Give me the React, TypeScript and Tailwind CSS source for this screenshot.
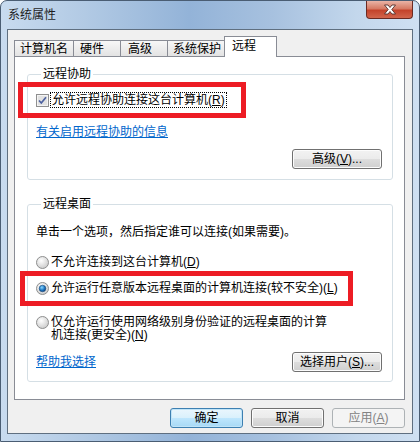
import React from 'react';

function Btn({ children, def, disabled, w = 'w-[73px]' }: { children: React.ReactNode; def?: boolean; disabled?: boolean; w?: string }) {
  if (def) {
    return (
      <div className={`${w} h-[20px] rounded-[3px] border border-[#3c7fb1] bg-[linear-gradient(#eaf6fd_0%,#d9f0fc_50%,#bee6fd_51%,#a7d9f5_100%)] flex items-center justify-center text-[12px] text-black shadow-[inset_0_0_0_1px_#c0e4f8]`}>
        {children}
      </div>
    );
  }
  if (disabled) {
    return (
      <div className={`${w} h-[20px] rounded-[3px] border border-[#adb2b5] bg-[#f4f4f4] flex items-center justify-center text-[12px] text-[#838383]`}>
        {children}
      </div>
    );
  }
  return (
    <div className={`${w} h-[20px] rounded-[3px] border border-[#707070] bg-[linear-gradient(#f2f2f2_0%,#ebebeb_50%,#dddddd_51%,#cfcfcf_100%)] flex items-center justify-center text-[12px] text-black shadow-[inset_0_0_0_1px_#fcfcfc]`}>
      {children}
    </div>
  );
}

function Radio({ on }: { on?: boolean }) {
  return (
    <svg width="13" height="13" viewBox="0 0 13 13" className="shrink-0">
      <defs>
        <radialGradient id="rg" cx="40%" cy="35%" r="70%">
          <stop offset="0%" stopColor="#ffffff" />
          <stop offset="100%" stopColor="#c9c9c9" />
        </radialGradient>
        <radialGradient id="rb" cx="40%" cy="35%" r="70%">
          <stop offset="0%" stopColor="#8ad8ff" />
          <stop offset="60%" stopColor="#1c74c0" />
          <stop offset="100%" stopColor="#0b3e77" />
        </radialGradient>
      </defs>
      <circle cx="6.5" cy="6.5" r="6" fill="url(#rg)" stroke="#8e8f8f" />
      {on && <circle cx="6.5" cy="6.5" r="3.3" fill="url(#rb)" stroke="#1b4a7a" strokeWidth="0.6" />}
    </svg>
  );
}

function Check() {
  return (
    <svg width="13" height="13" viewBox="0 0 13 13" className="shrink-0">
      <rect x="0.5" y="0.5" width="12" height="12" fill="#f4f4f4" stroke="#8f8f8f" />
      <rect x="2" y="2" width="9" height="9" fill="#e2e2e2" />
      <path d="M3 6.5 L5.3 9 L10 3.2" fill="none" stroke="#4d61a0" strokeWidth="1.7" />
    </svg>
  );
}

const u = (c: string) => <span className="underline">{c}</span>;

export default function App() {
  const tabs = [
    { t: '计算机名', w: 'w-[60px]', pl: 'pl-[5px]' },
    { t: '硬件', w: 'w-[48px]', pl: 'pl-[6px]' },
    { t: '高级', w: 'w-[48px]', pl: 'pl-[7px]' },
    { t: '系统保护', w: 'w-[59px]', pl: 'pl-[5px]' },
  ];
  return (
    <div className="relative w-[420px] h-[442px] overflow-hidden rounded-t-[7px] border border-[#4a5d73] bg-[linear-gradient(90deg,#c8dbef_0%,#b2cae4_20%,#93b3d8_45%,#a7c1df_65%,#c3d7ec_85%,#cfe0f2_100%)] font-['Liberation_Sans','Noto_Sans_CJK_SC',sans-serif] text-[12px] text-black">
      {/* title */}
      <div className="h-[28px] pl-[7px] flex items-center text-[12px] text-[#1e1e1e]">系统属性</div>
      <div className="absolute right-[6px] top-0 w-[47px] h-[18px] rounded-b-[4px] border border-t-0 border-[#6b2a22] bg-[linear-gradient(#eab4a6_0%,#d67a64_45%,#c4432b_55%,#d2654c_100%)] flex items-center justify-center">
        <svg width="14" height="11" viewBox="0 0 14 11">
          <path d="M1.5 1 L5 1 L7 3.5 L9 1 L12.5 1 L8.8 5.5 L12.5 10 L9 10 L7 7.5 L5 10 L1.5 10 L5.2 5.5 Z" fill="#ffffff" stroke="#53302a" strokeWidth="0.9" />
        </svg>
      </div>

      {/* client area */}
      <div className="ml-[6px] w-[406px] h-[405px] border border-[#5f6f80] bg-[#f0f0f0] pt-[6px] pl-[6px]">
        <div className="flex items-end h-[20px]">
          {tabs.map((x) => (
            <div key={x.t} className={`${x.w} ${x.pl} h-[16px] -mr-px border border-b-0 border-[#898c95] bg-[linear-gradient(#f7f7f7,#e3e3e3)] flex items-center`}>
              {x.t}
            </div>
          ))}
          <div className="relative z-10 w-[53px] h-[21px] -mb-px -ml-px pl-[7px] pb-[3px] border border-b-0 border-[#898c95] bg-white flex items-center">远程</div>
        </div>

        <div className="w-[391px] h-[344px] border border-[#898c95] bg-white pt-[10px] pl-[12px]">
          <fieldset className="w-[366px] border border-[#d5dfe5] rounded-[3px] pl-[8px] pr-[10px] pb-[10px]">
            <legend className="ml-[5px] px-[2px] leading-[14px]">远程协助</legend>
            <div className="mt-[11px] h-[16px] flex items-center">
              <Check />
              <span className="ml-px px-px leading-[14px] border border-dotted border-black">允许远程协助连接这台计算机({u('R')})</span>
            </div>
            <div className="mt-[17px] leading-[14px] text-[#0066cc] underline">有关启用远程协助的信息</div>
            <div className="mt-[10px] flex justify-end">
              <Btn w="w-[90px]">高级({u('V')})...</Btn>
            </div>
          </fieldset>

          <fieldset className="mt-[17px] w-[366px] border border-[#d5dfe5] rounded-[3px] pl-[8px] pr-[10px] pb-[9px]">
            <legend className="ml-[5px] px-[2px] leading-[14px]">远程桌面</legend>
            <div className="mt-[14px] leading-[14px]">单击一个选项，然后指定谁可以连接(如果需要)。</div>
            <div className="mt-[15px] h-[16px] flex items-center gap-[2px]">
              <Radio />
              <span>不允许连接到这台计算机({u('D')})</span>
            </div>
            <div className="mt-[10px] h-[16px] flex items-center gap-[2px]">
              <Radio on />
              <span>允许运行任意版本远程桌面的计算机连接(较不安全)({u('L')})</span>
            </div>
            <div className="mt-[20px] flex items-start gap-[2px]">
              <Radio />
              <span className="w-[282px] leading-[13px]">仅允许运行使用网络级别身份验证的远程桌面的计算机连接(更安全)({u('N')})</span>
            </div>
            <div className="mt-[10px] h-[20px] flex items-center justify-between">
              <span className="text-[#0066cc] underline">帮助我选择</span>
              <Btn w="w-[90px]">选择用户({u('S')})...</Btn>
            </div>
          </fieldset>
        </div>

        <div className="mt-[8px] w-[391px] flex justify-end gap-[8px]">
          <Btn def>确定</Btn>
          <Btn>取消</Btn>
          <Btn disabled>应用({u('A')})</Btn>
        </div>
      </div>

      {/* red annotation boxes */}
      <div className="absolute left-[17px] top-[81px] w-[228px] h-[36px] border-[5px] border-[#ed1c24]" />
      <div className="absolute left-[19px] top-[270px] w-[333px] h-[35px] border-[5px] border-[#ed1c24]" />
    </div>
  );
}
